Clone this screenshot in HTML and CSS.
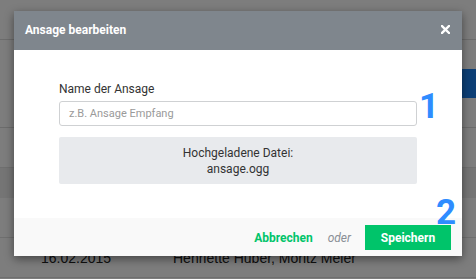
FILE: index.html
```html
<!DOCTYPE html>
<html lang="de">
<head>
<meta charset="utf-8">
<title>Ansage bearbeiten</title>
<link rel="stylesheet" href="styles.css">
</head>
<body>
<div class="page">
  <div class="topbar"></div>
  <div class="toolbar"><span class="blue-btn"></span></div>
  <div class="row"></div>
  <div class="row row-alt"></div>
  <div class="row"></div>
  <div class="row row-text"><span class="c1">16.02.2015</span><span class="c2">Henriette Huber, Moritz Meier</span></div>
</div>
<div class="overlay">
  <div class="modal">
    <div class="modal-header">
      <span class="modal-title">Ansage bearbeiten</span>
      <svg class="close" width="9" height="9" viewBox="0 0 9 9" aria-label="Schließen"><path d="M1 1 L8 8 M8 1 L1 8" stroke="#fff" stroke-width="2.4" stroke-linecap="square"/></svg>
    </div>
    <div class="modal-body">
      <label class="label">Name der Ansage</label>
      <div class="input">z.B. Ansage Empfang</div>
      <div class="file-box">
        <div>Hochgeladene Datei:</div>
        <div>ansage.ogg</div>
      </div>
    </div>
    <div class="modal-footer">
      <span class="cancel">Abbrechen</span>
      <span class="or">oder</span>
      <span class="save">Speichern</span>
    </div>
    <span class="mark mark-1">1</span>
    <span class="mark mark-2">2</span>
  </div>
</div>
</body>
</html>
```

FILE: styles.css
```css
* { box-sizing: border-box; }
html, body { margin: 0; padding: 0; }
body {
  width: 476px;
  height: 279px;
  overflow: hidden;
  font-family: Roboto, "Liberation Sans", Arial, sans-serif;
  background: #fff;
  position: relative;
}
.page { width: 476px; }
.topbar { height: 40px; border-bottom: 1px solid #dcdcdc; }
.toolbar { height: 88px; border-bottom: 1px solid #dcdcdc; display: flex; justify-content: flex-end; padding-top: 29px; }
.blue-btn { display: block; width: 20px; height: 29px; background: #1a82f0; }
.row { height: 40px; border-bottom: 1px solid #e2e2e2; }
.row-alt { height: 30px; background: #eeeeee; border-bottom: none; }
.row-text { height: 40px; display: flex; align-items: flex-end; padding-bottom: 11px; font-size: 14px; color: #222; font-family: "Liberation Sans", Arial, sans-serif; }
.c1 { margin-left: 41px; width: 132px; }
.overlay {
  position: absolute;
  inset: 0;
  background: rgba(0, 0, 0, 0.51);
  padding: 11px 14px 0 14px;
}
.modal {
  position: relative;
  width: 448px;
  background: #fff;
  box-shadow: 0 3px 9px rgba(0, 0, 0, 0.45);
}
.modal-header {
  height: 39px;
  background: #7f868d;
  display: flex;
  align-items: center;
  justify-content: space-between;
  padding: 0 12px 2px 11px;
  color: #fff;
}
.modal-title { font-size: 12px; font-weight: 700; }
.close { display: block; }
.modal-body { padding: 32px 45px 34px 45px; }
.label { display: block; font-size: 12px; color: #333; line-height: 14px; margin-bottom: 5px; }
.input {
  height: 25px;
  border: 1px solid #cfd1d3;
  border-radius: 3px;
  padding: 0 9px;
  font-size: 11px;
  color: #9a9a9a;
  display: flex;
  align-items: center;
}
.file-box {
  margin-top: 11px;
  height: 47px;
  background: #e8eaed;
  border-radius: 2px;
  display: flex;
  flex-direction: column;
  align-items: center;
  justify-content: center;
  font-size: 12px;
  line-height: 16px;
  color: #333;
}
.modal-footer {
  height: 38px;
  background: #f9f9f9;
  display: flex;
  align-items: flex-start;
  justify-content: flex-end;
  padding: 7px 11px 0 0;
}
.cancel, .or, .save { height: 25px; display: flex; align-items: center; font-size: 12px; }
.cancel { color: #00c46a; font-weight: 700; margin-right: 15px; }
.or { color: #8a8f96; font-style: italic; margin-right: 14px; }
.save { width: 86px; justify-content: center; background: #00c46a; color: #fff; font-weight: 700; }
.mark {
  position: absolute;
  color: #2f8cff;
  font-weight: 700;
  font-size: 35px;
  line-height: 1;
}
.mark-1 { left: 405px; top: 78px; }
.mark-2 { left: 422px; top: 184px; }
```
